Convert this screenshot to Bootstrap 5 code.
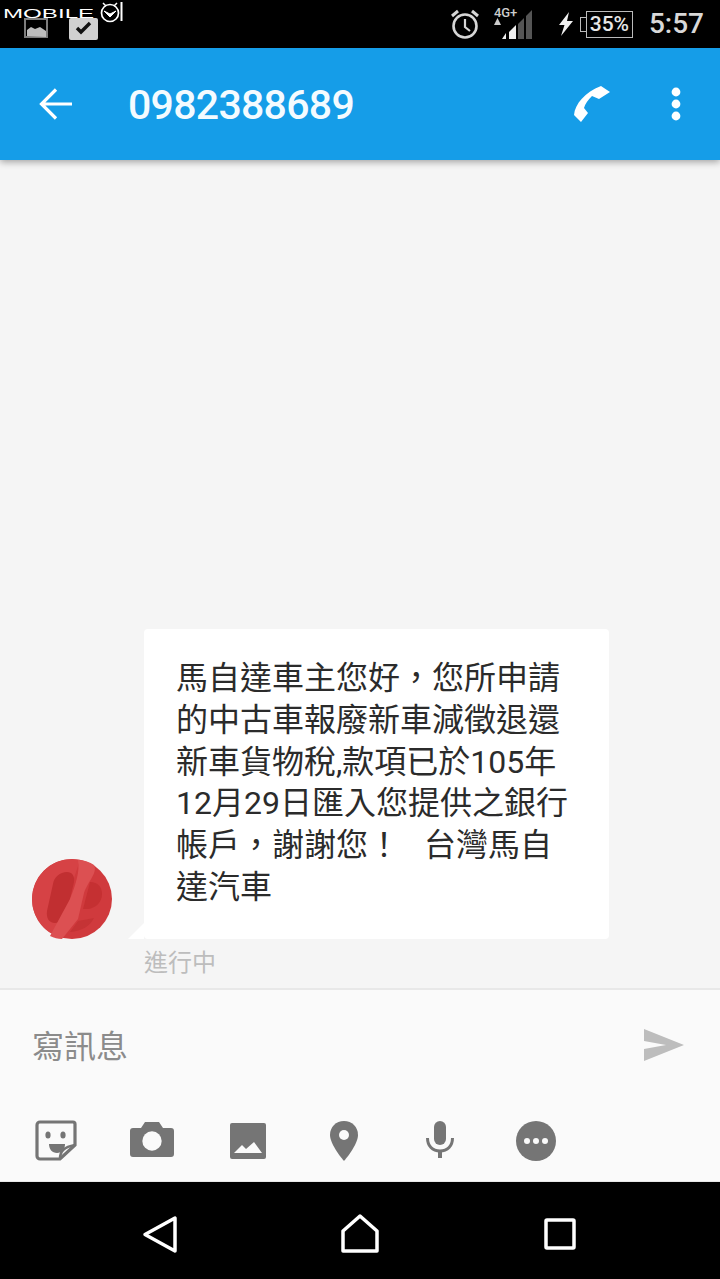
<!DOCTYPE html>
<html lang="zh-Hant">
<head>
<meta charset="utf-8">
<title>0982388689</title>
<link href="https://cdn.jsdelivr.net/npm/bootstrap@5.3.0/dist/css/bootstrap.min.css" rel="stylesheet">
<style>
html,body{margin:0;height:100%;background:#000}
.phone{width:720px;height:1279px;overflow:hidden;position:relative;font-family:Roboto,"Noto Sans CJK TC",sans-serif}
.sbar{height:48px;background:#000;color:#d8d8d8;padding-left:24px;padding-right:16px;position:relative}
.watermark{position:absolute;left:3px;top:0;display:flex;align-items:flex-start;color:#fff}
.wm-text{font:400 12.5px/1 "Liberation Sans",sans-serif;transform:scaleX(1.93);transform-origin:left top;width:94px;margin-top:8px;display:block}
.clock{font:500 28px/1 Roboto,sans-serif;color:#d8d8d8;margin-left:16px}
.bat{font:500 21px/1 Roboto,sans-serif;color:#e6e6e6;width:47px;height:27px;border:1.5px solid #bbb;display:flex;align-items:center;justify-content:center}
.bat-cap{width:6px;height:15px;border:1.5px solid #bbb;border-right:0;margin-left:6px}
.net{position:relative;width:40px;height:40px;margin-left:13px}
.net-label{position:absolute;left:0;top:2px;font:500 13px/1 Roboto,sans-serif;color:#ccc;white-space:nowrap}
.bolt{margin-left:24px}
.tbar{height:112px;background:#159de8;box-shadow:0 2px 7px rgba(0,0,0,.35);position:relative;z-index:2;color:#fff}
.tnum{font:500 41px/1 Roboto,sans-serif;letter-spacing:-.7px;margin-left:54px;margin-top:2px;color:#f4fbff}
.tback{margin-left:38px}
.tcall{margin-right:57px}
.tmore{margin-right:38px}
.chat{height:828px;background:#f5f5f5;padding-left:32px;padding-bottom:12px}
.avatar-svg{display:block;flex:none}
.msg{width:465px;height:310px;margin-left:32px;background:#fff;border-radius:4px;position:relative;padding:29px 24px 0 32px;font-size:32px;line-height:41.8px;color:#2b2b2b;font-family:Roboto,"Noto Sans CJK TC",sans-serif}
.msg::before{content:"";position:absolute;left:-16px;bottom:0;width:0;height:0;border-style:solid;border-width:0 0 16px 16px;border-color:transparent transparent #fff transparent}
.msg span{display:block;white-space:nowrap}
.sig{margin-left:8px}
.status-txt{font:400 24px/1 "Noto Sans CJK TC",sans-serif;color:#bdbdbd;margin:10px 0 0 112px;height:27px}
.compose{height:195px;background:#fafafa;border-top:2px solid #e8e8e8;border-bottom:2px solid #e8e8e8}
.compose-in{height:112px;padding:0 36px 2px 32px}
.ph{font:400 32px/1 "Noto Sans CJK TC",sans-serif;color:#8b8b8b;margin-top:-2px}
.tools{height:81px;padding-left:32px;padding-top:15px}
.tool{width:48px;height:48px;margin-right:48px;flex:none}
.tool svg{display:block}
.nbar{height:96px;background:#000;padding-left:136px;padding-top:8px;margin-top:-1px}
.nbtn{flex:none;display:block}
.nbtn-gap{margin-left:152px}
</style>
</head>
<body>
<div class="phone d-flex flex-column">
  <div class="sbar d-flex align-items-center">
    <svg width="86" height="40" viewBox="0 0 86 40">
      <g fill="none">
        <rect x="1" y="15" width="22" height="18" fill="#000" stroke="#7d7d7d" stroke-width="2"/>
        <path d="M3 32V26l4-3 4 2 5-2 6 4v6z" fill="#bdbdbd"/>
        <rect x="45" y="14" width="29" height="22" rx="2" fill="#d0d0d0"/>
        <path d="M53 24l4 4 9-9" stroke="#111" stroke-width="3.4"/>
      </g>
    </svg>
    <div class="ms-auto d-flex align-items-center">
      <svg width="32" height="32" viewBox="0 0 32 32" fill="none" stroke="#d6d6d6" stroke-width="2.6">
        <circle cx="16" cy="18" r="11.5"/><path d="M16 11v8l5 4" stroke-width="2.2"/>
        <path d="M3 8l6-5M29 8l-6-5" stroke-width="3"/>
      </svg>
      <div class="net">
        <span class="net-label">4G+</span>
        <svg width="40" height="40" viewBox="0 0 40 40">
          <path d="M0 21l3.500-7 3.500 7z" fill="#ccc"/>
          <path d="M8 35l4-6v6z" fill="#eee"/>
          <path d="M15 35V28l7-7v14z" fill="#eee"/>
          <path d="M24 35V20l6-6v21z" fill="#555"/>
          <path d="M32 35V12l6-6v29z" fill="#555"/>
        </svg>
      </div>
      <svg class="bolt" width="16" height="24" viewBox="0 0 16 24"><path d="M11 0L1 13h5.500L3 24 15 9H9z" fill="#f0f0f0"/></svg>
      <div class="bat-cap"></div>
      <div class="bat">35%</div>
      <div class="clock">5:57</div>
    </div>
    <div class="watermark">
      <span class="wm-text">MOBILE</span>
      <svg width="30" height="24" viewBox="0 0 30 24" fill="none" stroke="#fff">
        <circle cx="13" cy="13" r="8.500" stroke-width="1.700"/>
        <path d="M6 3l3 3M20 3l-3 3" stroke-width="1.500"/>
        <path d="M7 11l6 3 6-3-6 6z" fill="#fff" stroke-width="1"/>
        <path d="M24.500 2v19" stroke-width="2"/>
      </svg>
    </div>
  </div>

  <div class="tbar d-flex align-items-center">
    <svg class="tback" width="36" height="36" viewBox="0 0 36 36" fill="none" stroke="#fff" stroke-width="3.200"><path d="M34 18H5M18 3.500L3.500 18 18 32.500"/></svg>
    <div class="tnum">0982388689</div>
    <svg class="ms-auto tcall" width="42" height="42" viewBox="0 0 42 42"><path d="M30 3l9 6-11 7-7-3c-4 4-7 8-8 12l4 5-7 9-7-7C4 21 14 9 30 3z" fill="#fff"/></svg>
    <svg class="tmore" width="12" height="36" viewBox="0 0 12 36" fill="#fff"><circle cx="6" cy="6" r="4.400"/><circle cx="6" cy="18" r="4.400"/><circle cx="6" cy="30" r="4.400"/></svg>
  </div>

  <div class="chat d-flex flex-column justify-content-end">
    <div class="d-flex align-items-end">
      <svg class="avatar-svg" width="80" height="80" viewBox="0 0 80 80">
        <circle cx="40" cy="40" r="40" fill="#d03a3d"/>
        <path d="M0 40A40 40 0 0 1 48 1C40 25 30 55 22 76A40 40 0 0 1 0 40z" fill="#d64245"/>
        <path d="M35 13c5 0 8 4 7 10l-7 30c-2 8-7 11-12 11-6 0-9-5-8-12l6-27c1-7 7-12 14-12z" fill="#c12f31"/>
        <path d="M58 23c8 0 12 5 12 12 0 8-6 14-14 15l-5 0z" fill="#c53032"/>
        <path d="M46 62l16-3c-4 8-12 13-24 14z" fill="#c53335"/>
        <path d="M46 1c6 0 12 2 16 5 4 8-6 16-10 28l-6 26-16 20c-4 0-8-1-12-3l20-37c6-15 10-28 8-39z" fill="#dc5052"/>
      </svg>
      <div class="msg">
        <span>馬自達車主您好，您所申請</span>
        <span>的中古車報廢新車減徵退還</span>
        <span>新車貨物稅,款項已於105年</span>
        <span>12月29日匯入您提供之銀行</span>
        <span>帳戶，謝謝您！<span class="sig d-inline">&nbsp; 台灣馬自</span></span>
        <span>達汽車</span>
      </div>
    </div>
    <div class="status-txt">進行中</div>
  </div>

  <div class="compose">
    <div class="compose-in d-flex align-items-center">
      <div class="ph">寫訊息</div>
      <svg class="ms-auto" width="41" height="32" viewBox="0 0 41 32"><path d="M1 0l40 16L1 32V20l22-4L1 12z" fill="#bdbdbd"/></svg>
    </div>
    <div class="tools d-flex align-items-start">
      <div class="tool"><svg width="48" height="48" viewBox="0 0 48 48" fill="none">
        <path d="M8 5h33a2 2 0 0 1 2 2v21L28 42H8a3 3 0 0 1-3-3V8a3 3 0 0 1 3-3z" stroke="#757575" stroke-width="3.200"/>
        <path d="M28 42c0-8 4-12 15-14" stroke="#757575" stroke-width="2.600"/>
        <ellipse cx="16" cy="18" rx="2.600" ry="3.600" fill="#757575"/><ellipse cx="31" cy="18" rx="2.600" ry="3.600" fill="#757575"/>
        <path d="M17 27h16c0 5-3 9-8 9s-8-4-8-9z" fill="#757575"/>
      </svg></div>
      <div class="tool"><svg width="48" height="48" viewBox="0 0 48 48">
        <path d="M17 5h14l4 6h8a3 3 0 0 1 3 3v23a3 3 0 0 1-3 3H5a3 3 0 0 1-3-3V14a3 3 0 0 1 3-3h8z" fill="#757575"/>
        <circle cx="24" cy="24" r="9.700" fill="#fafafa"/>
      </svg></div>
      <div class="tool"><svg width="48" height="48" viewBox="0 0 48 48">
        <rect x="6" y="6" width="36" height="36" rx="2" fill="#757575"/>
        <path d="M10 36l8-8 4 4 8-7 8 11z" fill="#fafafa"/>
      </svg></div>
      <div class="tool"><svg width="48" height="48" viewBox="0 0 48 48">
        <path d="M24 4c-8 0-14 6-14 14 0 10 14 26 14 26s14-16 14-26c0-8-6-14-14-14z" fill="#757575"/>
        <circle cx="24" cy="18" r="5" fill="#fafafa"/>
      </svg></div>
      <div class="tool"><svg width="48" height="48" viewBox="0 0 48 48" fill="none">
        <rect x="18" y="4" width="12" height="24" rx="6" fill="#757575"/>
        <path d="M11.500 21c0 8 5 13 12.500 13s12.500-5 12.500-13" stroke="#757575" stroke-width="3"/>
        <path d="M24 33v8" stroke="#757575" stroke-width="4"/>
      </svg></div>
      <div class="tool"><svg width="48" height="48" viewBox="0 0 48 48">
        <circle cx="24" cy="24" r="20" fill="#757575"/>
        <circle cx="15" cy="24" r="3" fill="#fafafa"/><circle cx="24" cy="24" r="3" fill="#fafafa"/><circle cx="33" cy="24" r="3" fill="#fafafa"/>
      </svg></div>
    </div>
  </div>

  <div class="nbar d-flex align-items-center">
    <svg class="nbtn" width="48" height="48" viewBox="0 0 48 48" fill="none" stroke="#fff" stroke-width="3.500" stroke-linejoin="round"><path d="M39 8v33L9 24.500z"/></svg>
    <svg class="nbtn nbtn-gap" width="48" height="48" viewBox="0 0 48 48" fill="none" stroke="#fff" stroke-width="3.500" stroke-linejoin="round"><path d="M24 6L7 21v20h34V21z"/></svg>
    <svg class="nbtn nbtn-gap" width="48" height="48" viewBox="0 0 48 48" fill="none" stroke="#fff" stroke-width="3.500" stroke-linejoin="round"><rect x="10" y="10" width="28" height="28" rx="1"/></svg>
  </div>
</div>
<script src="https://cdn.jsdelivr.net/npm/bootstrap@5.3.0/dist/js/bootstrap.bundle.min.js"></script>
</body>
</html>
